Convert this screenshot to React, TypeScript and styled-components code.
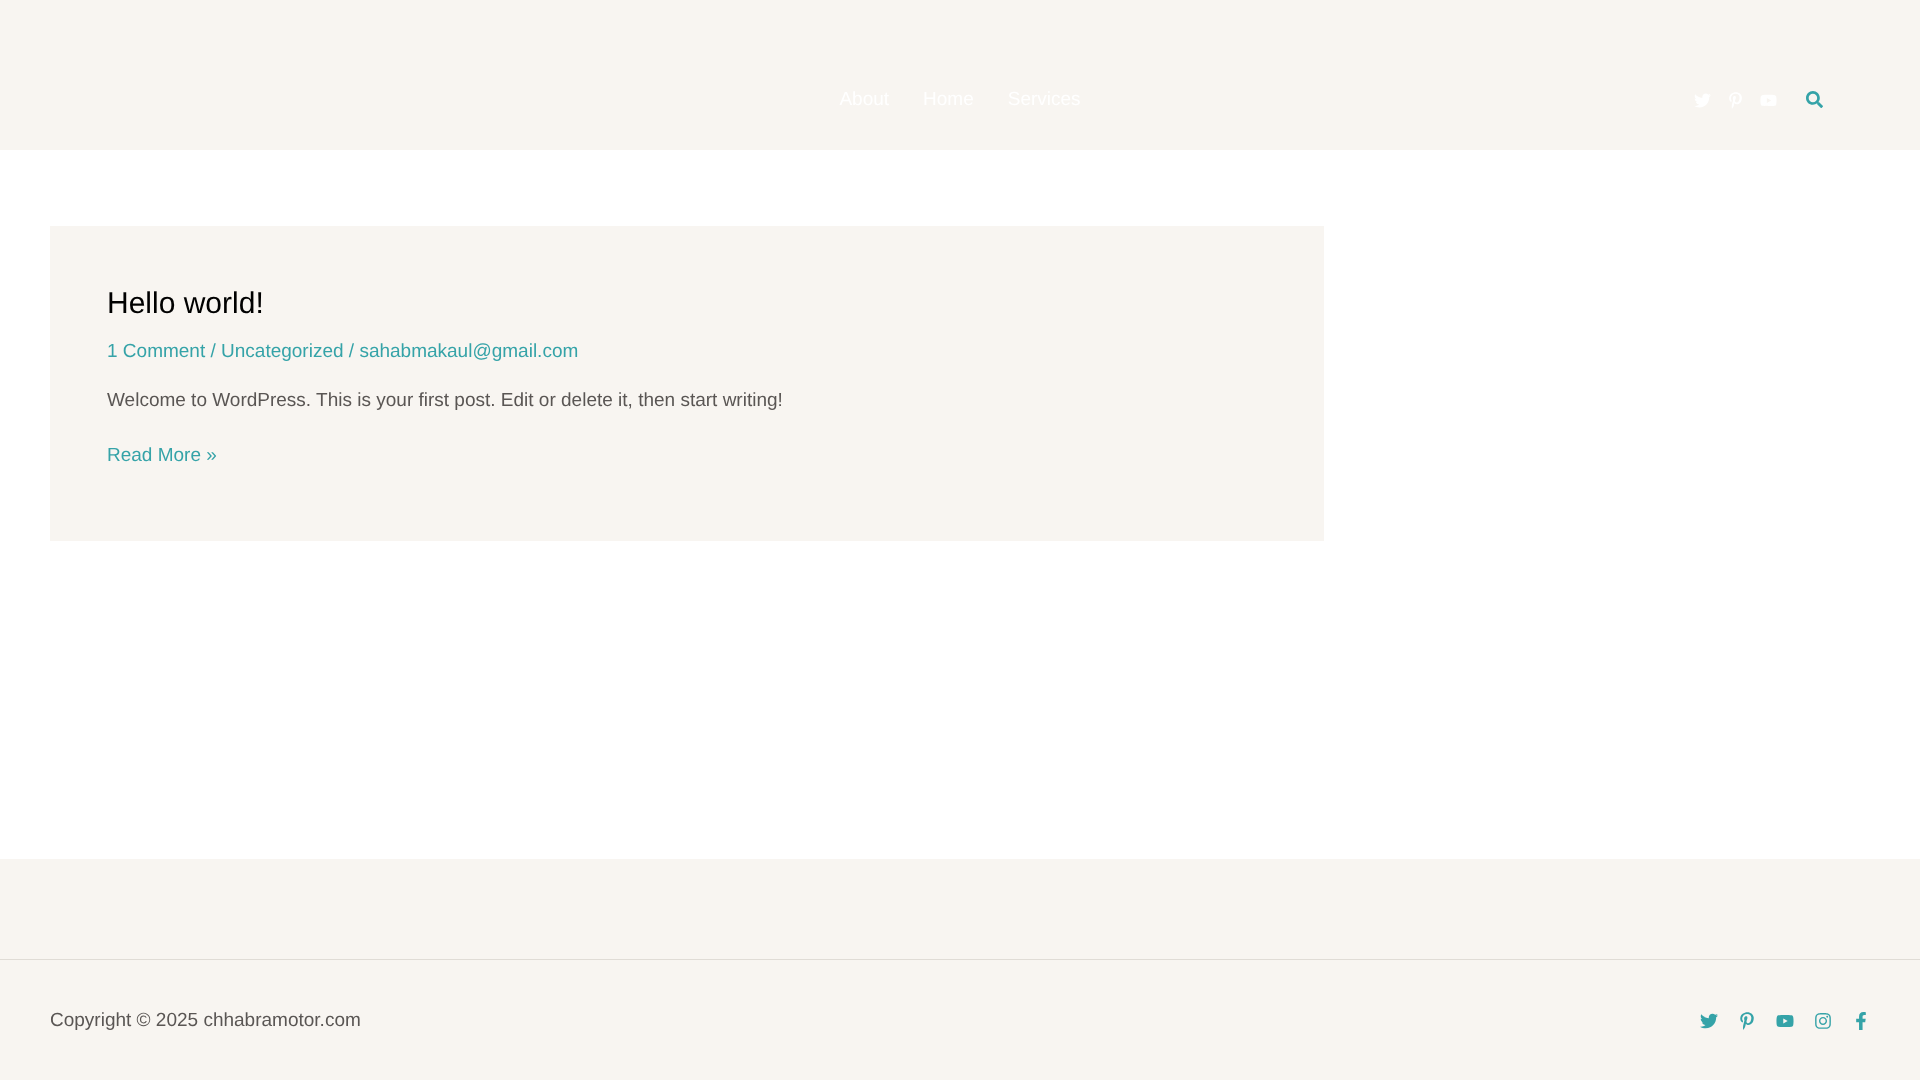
import React from "react";
import styled, { createGlobalStyle } from "styled-components";
import { FaTwitter, FaPinterestP, FaYoutube, FaInstagram, FaFacebookF, FaSearch } from "react-icons/fa";

const teal = "#35a3a8";
const cream = "#f8f5f1";

const Global = createGlobalStyle`
  html, body { margin: 0; padding: 0; background: #fff; }
  body {
    font-family: "Liberation Sans", Arial, sans-serif;
    font-size: 19px;
    color: #5a5654;
    text-rendering: geometricPrecision;
  }
  a { color: inherit; text-decoration: none; }
`;

const Page = styled.div`
  display: flex;
  flex-direction: column;
  min-height: 1080px;
  will-change: transform;
`;

const Header = styled.header`
  display: grid;
  grid-template-columns: 1fr auto 1fr;
  align-items: center;
  height: 150px;
  box-sizing: border-box;
  padding: 50px 97px 0;
  background: ${cream};
`;

const Nav = styled.nav`
  grid-column: 2;
  display: flex;
  gap: 34px;
  font-size: 19px;
  color: #fff;
`;

const HeaderRight = styled.div`
  display: flex;
  align-items: center;
  justify-content: flex-end;
  gap: 29px;
`;

const Socials = styled.div<{ $gap: number; $color: string; $size: number }>`
  display: flex;
  align-items: center;
  gap: ${(p) => p.$gap}px;
  color: ${(p) => p.$color};
  font-size: ${(p) => p.$size}px;
  svg { display: block; }
`;

const SearchButton = styled.span`
  display: flex;
  color: ${teal};
  font-size: 17px;
  margin-top: -2px;
`;

const Main = styled.main`
  flex: 1;
  padding: 76px 50px 0;
`;

const Card = styled.article`
  width: 1274px;
  height: 315px;
  box-sizing: border-box;
  padding: 59px 57px 0;
  background: ${cream};
`;

const Title = styled.h2`
  margin: 0;
  font-size: 30px;
  line-height: 38px;
  font-weight: 400;
  color: #000;
`;

const Meta = styled.div`
  margin-top: 14px;
  line-height: 30px;
  color: ${teal};
`;

const Excerpt = styled.p`
  margin: 19px 0 0;
  line-height: 30px;
`;

const ReadMore = styled.a`
  display: block;
  margin-top: 25px;
  line-height: 30px;
  color: ${teal};
`;

const Footer = styled.footer`
  background: ${cream};
  height: 221px;
  box-sizing: border-box;
  padding-top: 100px;
`;

const FooterBar = styled.div`
  display: flex;
  align-items: center;
  justify-content: space-between;
  height: 121px;
  box-sizing: border-box;
  padding: 2px 50px 0;
  border-top: 1px solid #e0dcd6;
`;

export default function App() {
  return (
    <Page>
      <Global />
      <Header>
        <Nav>
          <a>About</a>
          <a>Home</a>
          <a>Services</a>
        </Nav>
        <HeaderRight>
          <Socials $gap={16} $color="#fff" $size={17}>
            <FaTwitter />
            <FaPinterestP />
            <FaYoutube />
          </Socials>
          <SearchButton>
            <FaSearch />
          </SearchButton>
        </HeaderRight>
      </Header>
      <Main>
        <Card>
          <Title>Hello world!</Title>
          <Meta>1 Comment / Uncategorized / sahabmakaul@gmail.com</Meta>
          <Excerpt>Welcome to WordPress. This is your first post. Edit or delete it, then start writing!</Excerpt>
          <ReadMore>Read More »</ReadMore>
        </Card>
      </Main>
      <Footer>
        <FooterBar>
          <span>Copyright © 2025 chhabramotor.com</span>
          <Socials $gap={20} $color={teal} $size={18}>
            <FaTwitter />
            <FaPinterestP />
            <FaYoutube />
            <FaInstagram />
            <FaFacebookF />
          </Socials>
        </FooterBar>
      </Footer>
    </Page>
  );
}
